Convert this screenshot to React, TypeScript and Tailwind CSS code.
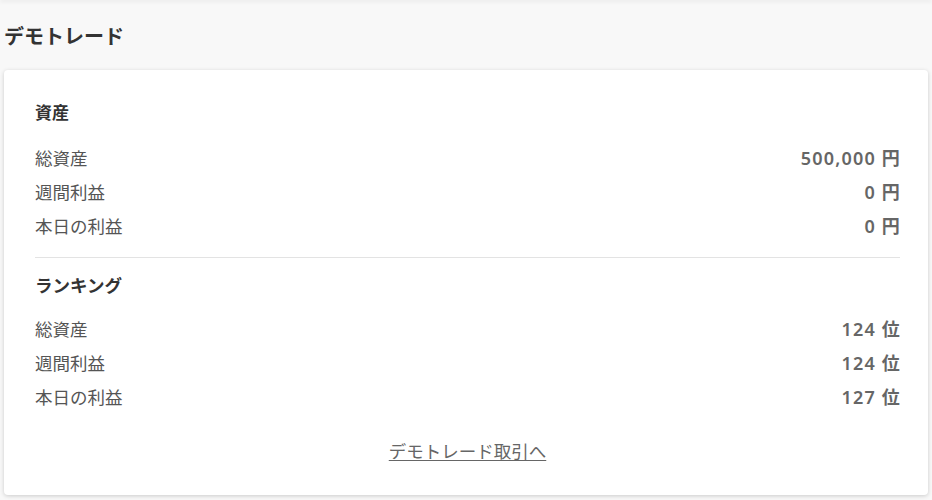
const rows = [
  { label: "総資産", assets: "500,000", rank: "124" },
  { label: "週間利益", assets: "0", rank: "124" },
  { label: "本日の利益", assets: "0", rank: "127" },
];

function StatRow({ label, value, unit }: { label: string; value: string; unit: string }) {
  return (
    <div className="flex items-center justify-between h-[34px]">
      <span className="text-[17.5px] text-[#555]">{label}</span>
      <span className="text-[18px] font-semibold text-[#666] tracking-[1.2px] -mr-[1px]">
        {value} {unit}
      </span>
    </div>
  );
}

export default function App() {
  return (
    <div
      className="min-h-[500px] bg-[#f8f8f8] overflow-hidden"
      style={{ fontFamily: '"Noto Sans", "Noto Sans CJK JP", sans-serif' }}
    >
      <div className="h-px -mt-px bg-white shadow-[0_1px_4px_rgba(0,0,0,0.18)]" />
      <div className="h-[70px] flex items-center pl-1 pt-1">
        <h1 className="text-[20px] leading-6 font-semibold text-[#333]">デモトレード</h1>
      </div>
      <div className="mx-1 bg-white rounded-[4px] shadow-[0_1px_4px_rgba(0,0,0,0.18)] pl-[31px] pr-[28px] pt-[31px] pb-[31px]">
        <h2 className="text-[17px] leading-6 font-bold text-[#333]">資産</h2>
        <div className="mt-4">
          {rows.map((r) => (
            <StatRow key={r.label} label={r.label} value={r.assets} unit="円" />
          ))}
        </div>
        <div className="mt-[14px] h-px bg-[#e3e3e3]" />
        <h2 className="mt-[15px] text-[17.5px] leading-6 font-bold text-[#333]">ランキング</h2>
        <div className="mt-[15px]">
          {rows.map((r) => (
            <StatRow key={r.label} label={r.label} value={r.rank} unit="位" />
          ))}
        </div>
        <div className="mt-[25px] text-center">
          <a href="#" className="text-[17.5px] leading-6 text-[#666] underline underline-offset-2">
            デモトレード取引へ
          </a>
        </div>
      </div>
    </div>
  );
}
